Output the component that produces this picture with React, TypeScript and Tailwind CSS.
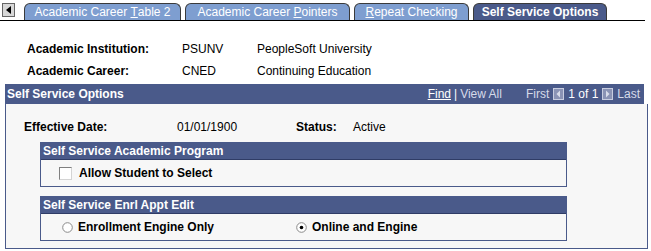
import React from 'react';

const Tab: React.FC<{ active?: boolean; width: string; children: React.ReactNode }> = ({ active, width, children }) => (
  <div
    className={`${width} h-[17px] flex items-center justify-center rounded-t-[6px] border border-b-0 border-[#3a3a3a] text-[12px] leading-none whitespace-pre ${
      active ? 'bg-[#4a5a8a] text-white font-bold' : 'bg-[#7e9ed0] text-white'
    }`}
  >
    {children}
  </div>
);

const NavIcon: React.FC<{ dir: 'left' | 'right' }> = ({ dir }) => (
  <svg width="11" height="12" viewBox="0 0 11 12" className="mx-[4px]">
    <rect x="0.5" y="0.5" width="10" height="11" fill="#8a93b5" stroke="#c8cde0" />
    {dir === 'left' ? <polygon points="7,2.5 7,9.5 3.5,6" fill="#d8dcea" /> : <polygon points="4,2.5 4,9.5 7.5,6" fill="#d8dcea" />}
  </svg>
);

const Radio: React.FC<{ checked?: boolean }> = ({ checked }) => (
  <svg width="11" height="11" viewBox="0 0 11 11">
    <circle cx="5.5" cy="5.5" r="4.8" fill="#fff" stroke="#8a8a8a" />
    {checked && <circle cx="5.5" cy="5.5" r="1.8" fill="#000" />}
  </svg>
);

const App: React.FC = () => {
  return (
    <div className="w-[651px] h-[251px] bg-white font-['Liberation_Sans',Arial,sans-serif] text-[12px] text-black overflow-hidden">
      {/* tab strip */}
      <div className="w-[645px] h-[21px] flex items-end border-b border-black">
        <div className="w-[13px] h-[14px] ml-[2px] mb-[3px] border border-[#666] bg-[#d8d8d8] flex items-center justify-center">
          <svg width="6" height="8" viewBox="0 0 6 8">
            <polygon points="5,0 5,8 0,4" fill="#000" />
          </svg>
        </div>
        <div className="flex items-end gap-[4px] ml-[9px]">
          <Tab width="w-[157px]">
            {'Academic Career '}<span className="underline">T</span>{'able 2'}
          </Tab>
          <Tab width="w-[165px]">
            {'Academic Career '}<span className="underline">P</span>{'ointers'}
          </Tab>
          <Tab width="w-[115px]">
            <span className="underline">R</span>{'epeat Checking'}
          </Tab>
          <Tab active width="w-[134px]">
            Self Service Options
          </Tab>
        </div>
      </div>

      {/* key fields */}
      <div className="mt-[17px] pl-[27px]">
        <div className="h-[22px] flex items-center">
          <div className="w-[155px] font-bold">Academic Institution:</div>
          <div className="w-[75px]">PSUNV</div>
          <div>PeopleSoft University</div>
        </div>
        <div className="h-[22px] flex items-center">
          <div className="w-[155px] font-bold">Academic Career:</div>
          <div className="w-[75px]">CNED</div>
          <div>Continuing Education</div>
        </div>
      </div>

      {/* scroll area */}
      <div className="mt-[2px] ml-[5px] w-[643px] h-[165px] flex flex-col">
        <div className="w-[639px] h-[20px] bg-[#4a5a8a] text-white flex items-center pl-[2px] pr-[4px]">
          <div className="font-bold flex-1">Self Service Options</div>
          <span className="underline">Find</span>
          <span className="mx-[3px]">|</span>
          <span className="text-[#d6dbe9]">View All</span>
          <span className="ml-[24px] text-[#d6dbe9]">First</span>
          <NavIcon dir="left" />
          <span>1 of 1</span>
          <NavIcon dir="right" />
          <span className="text-[#d6dbe9]">Last</span>
        </div>
        <div className="flex-1 border border-t-0 border-[#4a5a8a] bg-[#f7f7f7] pt-[12px]">
          <div className="h-[21px] flex items-center pl-[18px]">
            <div className="w-[153px] font-bold">Effective Date:</div>
            <div className="w-[119px]">01/01/1900</div>
            <div className="w-[57px] font-bold">Status:</div>
            <div>Active</div>
          </div>

          <div className="mt-[5px] ml-[34px] w-[527px] h-[45px] border border-[#4a5a8a] flex flex-col">
            <div className="h-[17px] bg-[#4a5a8a] border-b border-[#2f3c66] text-white font-bold flex items-center pl-[2px]">
              Self Service Academic Program
            </div>
            <div className="flex-1 flex items-center pl-[18px]">
              <div className="w-[13px] h-[13px] bg-white border border-[#808080] border-r-[#d4d4d4] border-b-[#d4d4d4]" />
              <span className="ml-[7px] font-bold">Allow Student to Select</span>
            </div>
          </div>

          <div className="mt-[9px] ml-[34px] w-[527px] h-[45px] border border-[#4a5a8a] flex flex-col">
            <div className="h-[17px] bg-[#4a5a8a] border-b border-[#2f3c66] text-white font-bold flex items-center pl-[2px]">
              Self Service Enrl Appt Edit
            </div>
            <div className="flex-1 flex items-center pl-[21px]">
              <Radio />
              <span className="ml-[5px] font-bold w-[218px]">Enrollment Engine Only</span>
              <Radio checked />
              <span className="ml-[5px] font-bold">Online and Engine</span>
            </div>
          </div>
        </div>
      </div>
    </div>
  );
};

export default App;
